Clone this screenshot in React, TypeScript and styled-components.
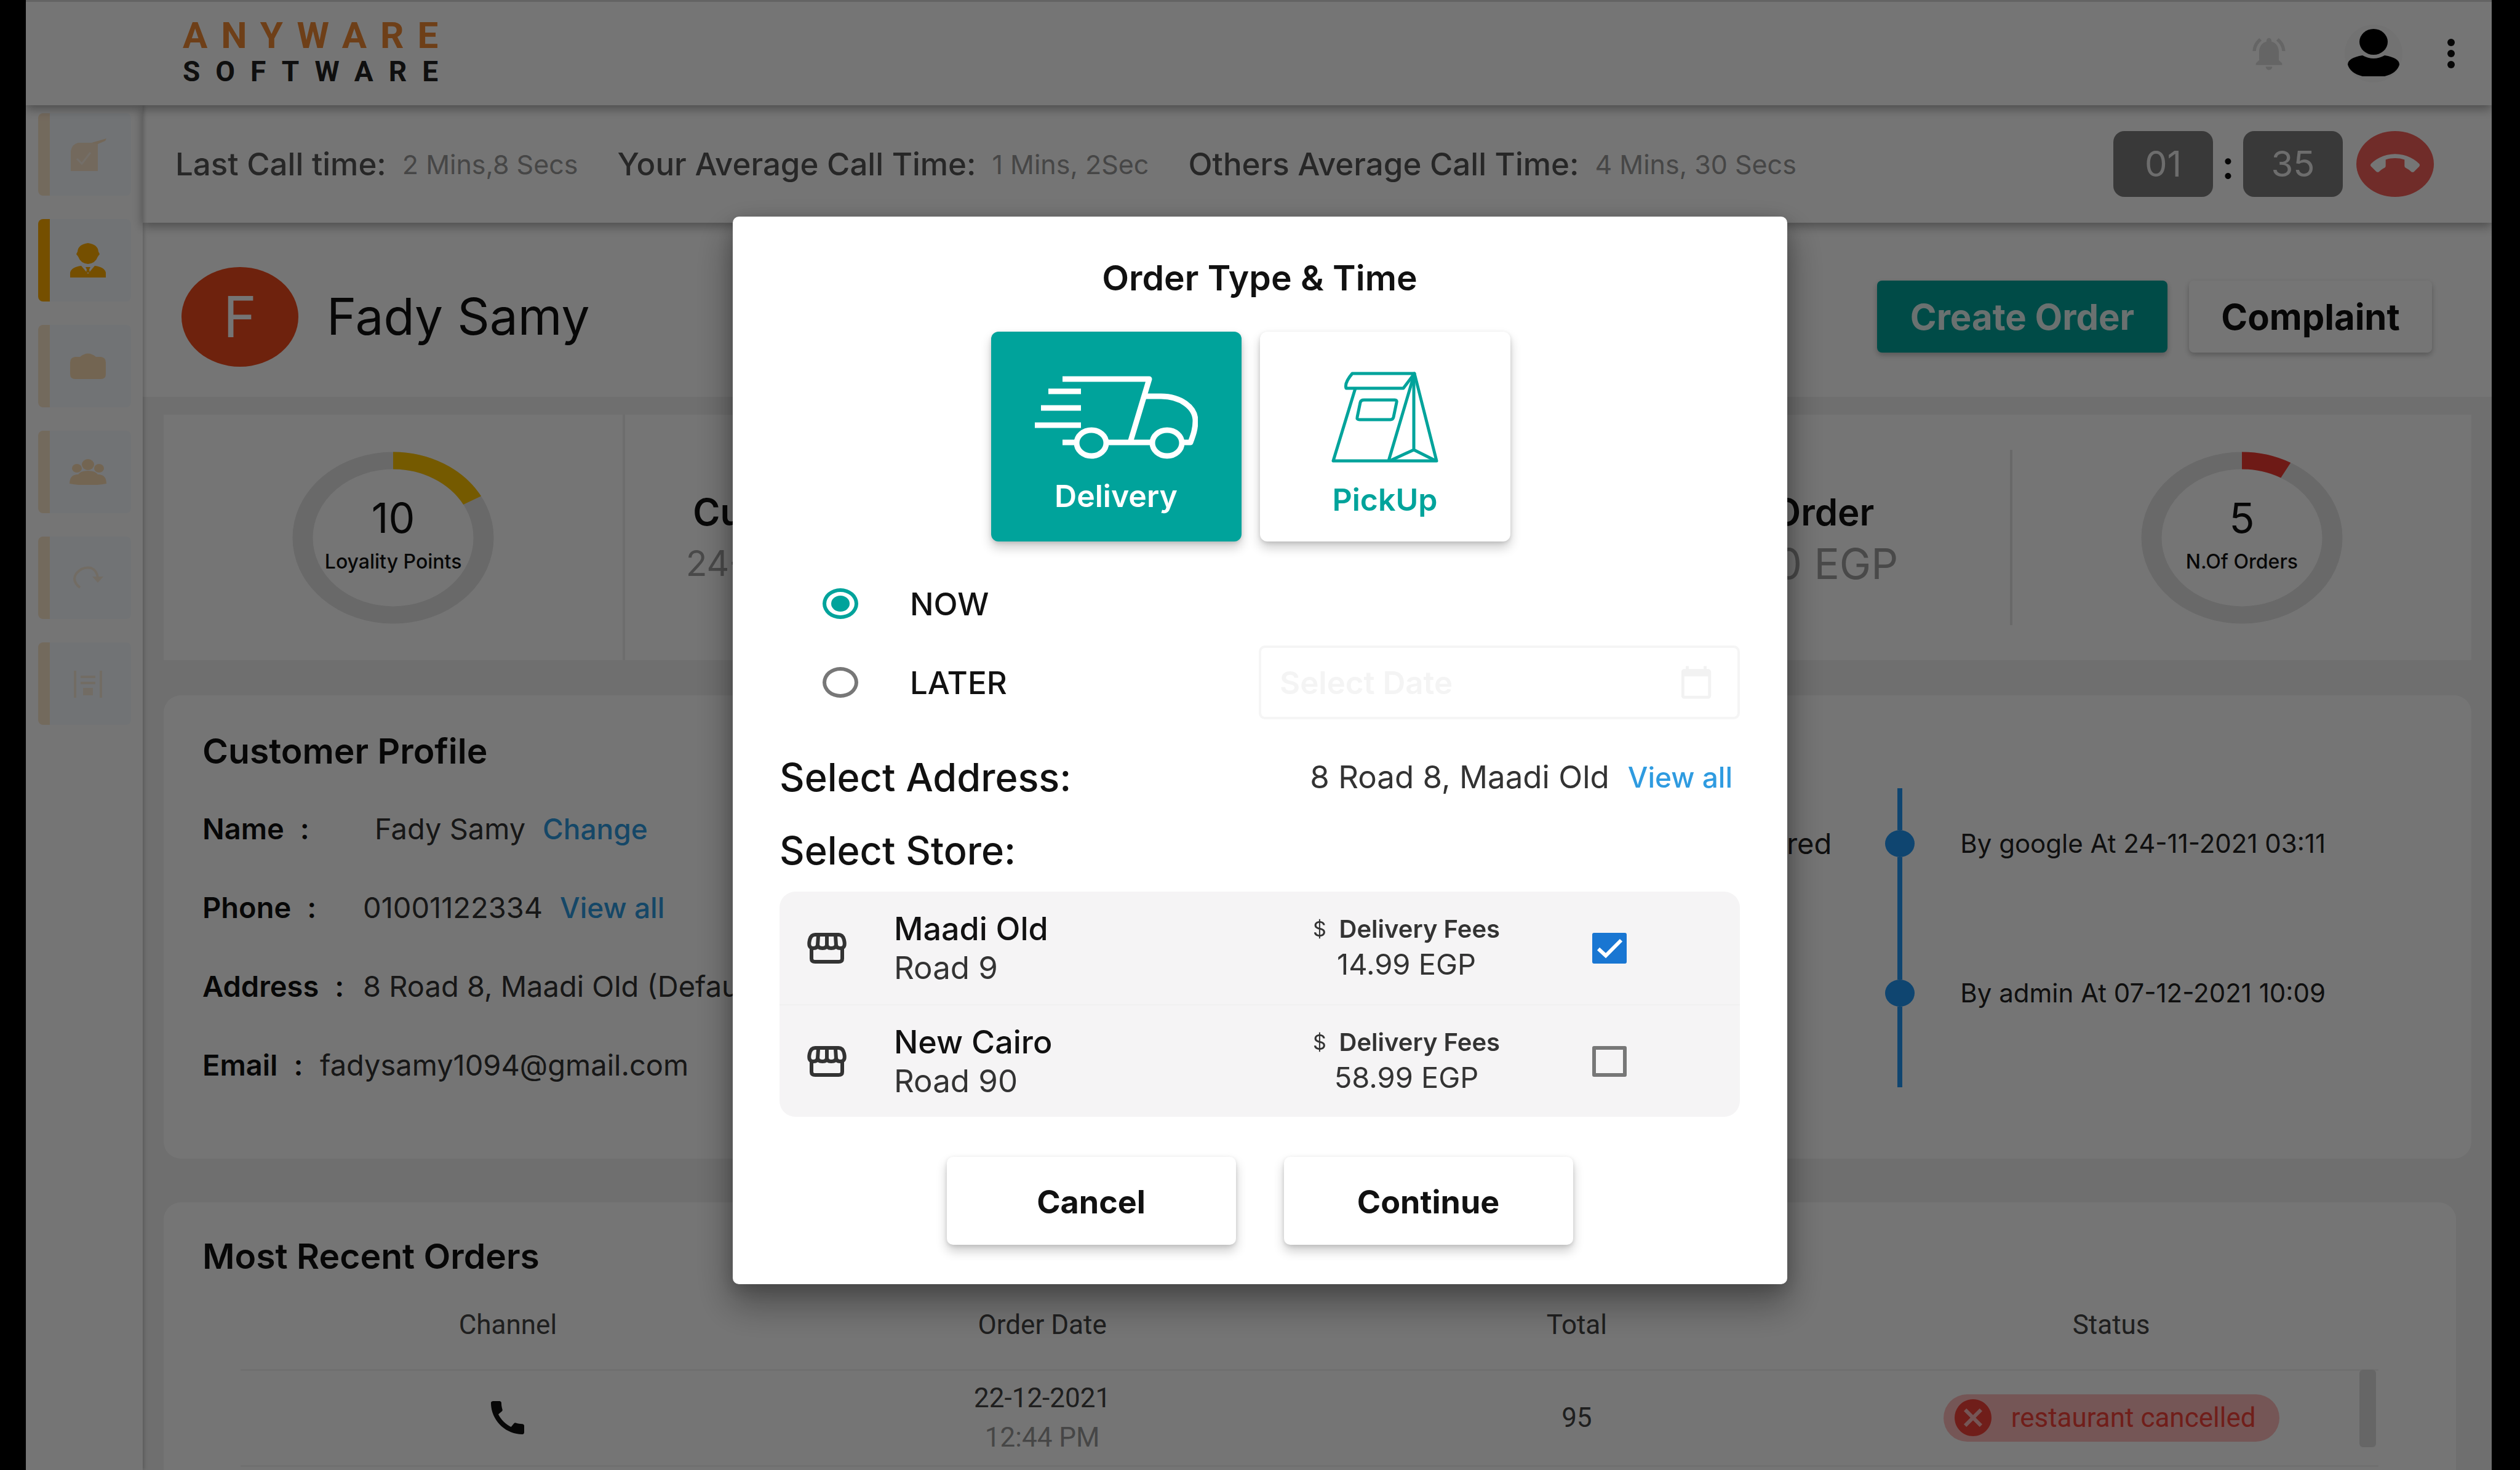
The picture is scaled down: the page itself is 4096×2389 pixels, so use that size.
import React, { useState } from 'react';
import styled, { createGlobalStyle } from 'styled-components';
import {
  MdCalendarToday,
  MdCall,
  MdCallEnd,
  MdCancel,
  MdNotificationsActive,
} from 'react-icons/md';

const teal = '#00a39b';
const sans = `Inter, 'Open Sans', sans-serif`;
const roboto = `Roboto, 'Open Sans', sans-serif`;

const GlobalStyle = createGlobalStyle`
  * { box-sizing: border-box; }
  body { margin: 0; background: #000; font-family: ${sans}; color: #111; }
  button, input { font-family: inherit; color: inherit; }
  button { border: 0; padding: 0; background: none; cursor: pointer; }
  a { text-decoration: none; }
  h1, h2, p, dl, dd, ol { margin: 0; padding: 0; }
  svg { display: block; }
`;

/* ---------- page shell ---------- */

const Shell = styled.div`
  height: 100vh;
  margin: 0 46px 0 42px;
  overflow: hidden;
  display: flex;
  flex-direction: column;
  background: #fff;
`;

const TopBar = styled.header`
  position: relative;
  z-index: 2;
  flex: none;
  height: 171px;
  display: flex;
  align-items: center;
  padding: 0 60px 0 255px;
  background: #fff;
  border-top: 3px solid #d8d8d8;
  box-shadow: 0 6px 16px rgba(0, 0, 0, 0.35);
`;

const Logo = styled.div`
  margin-right: auto;
  font-family: ${roboto};
  font-weight: 700;
`;

const LogoLine = styled.div<{ $size: number; $track: number; $color: string }>`
  font-size: ${(p) => p.$size}px;
  line-height: 58px;
  letter-spacing: ${(p) => p.$track}px;
  color: ${(p) => p.$color};
`;

const TopIcon = styled.button<{ $after: number; $color: string }>`
  margin-right: ${(p) => p.$after}px;
  color: ${(p) => p.$color};
`;

const Body = styled.div`
  flex: 1;
  min-height: 0;
  display: flex;
`;

const Sidebar = styled.nav`
  flex: none;
  width: 190px;
  padding: 13px 19px 0 20px;
  display: flex;
  flex-direction: column;
  gap: 38px;
  box-shadow: 2px 0 6px rgba(0, 0, 0, 0.2);
  z-index: 1;
`;

const SideItem = styled.a<{ $active?: boolean }>`
  height: 134px;
  display: flex;
  align-items: center;
  justify-content: center;
  padding-right: 8px;
  background: #f7fbff;
  border-left: 19px solid ${(p) => (p.$active ? '#ffad00' : '#fbe6cb')};
  border-radius: 8px;
  color: ${(p) => (p.$active ? '#ffad00' : '#fbdcb4')};
`;

const Content = styled.div`
  flex: 1;
  min-width: 0;
  display: flex;
  flex-direction: column;
`;

/* ---------- call bar ---------- */

const CallBar = styled.section`
  position: relative;
  flex: none;
  height: 191px;
  display: flex;
  align-items: center;
  padding: 0 94px 0 53px;
  background: #fff;
  box-shadow: 0 6px 16px rgba(0, 0, 0, 0.35);
`;

const CallStats = styled.dl`
  display: flex;
  gap: 64px;
  margin-right: auto;
  font-size: 43px;
  line-height: 60px;
`;

const CallStat = styled.div`
  display: flex;
  gap: 26px;
  dt { font-size: 51px; font-weight: 500; color: #555; }
  dd { color: #999; }
`;

const Timer = styled.div`
  display: flex;
  align-items: center;
`;

const TimerBox = styled.span`
  width: 162px;
  height: 107px;
  border-radius: 18px;
  background: #7c7c7c;
  color: #eee;
  font-size: 58px;
  line-height: 107px;
  text-align: center;
`;

const TimerColon = styled.span`
  width: 49px;
  font-size: 64px;
  font-weight: 600;
  line-height: 100px;
  text-align: center;
`;

const HangUp = styled.button`
  width: 126px;
  height: 107px;
  margin-left: 22px;
  border-radius: 50%;
  background: #f5605a;
  color: #fff;
  display: grid;
  place-items: center;
`;

/* ---------- customer heading ---------- */

const CustomerBar = styled.section`
  flex: none;
  height: 283px;
  display: flex;
  align-items: center;
  padding: 22px 97px 0 63px;
  background: #fff;
`;

const Avatar = styled.div`
  width: 190px;
  height: 162px;
  border-radius: 50%;
  background: #f04a1d;
  color: #fff;
  font-size: 92px;
  line-height: 162px;
  text-align: center;
`;

const CustomerName = styled.h1`
  margin-left: 46px;
  margin-right: auto;
  font-size: 82px;
  font-weight: 400;
`;

const BarButton = styled.button<{ $primary?: boolean }>`
  height: 117px;
  width: ${(p) => (p.$primary ? 472 : 395)}px;
  margin-left: 35px;
  border-radius: 8px;
  font-size: 58px;
  font-weight: 700;
  background: ${(p) => (p.$primary ? teal : '#fff')};
  color: ${(p) => (p.$primary ? '#e8f6f5' : '#111')};
  box-shadow: 0 4px 10px rgba(0, 0, 0, 0.25);
`;

/* ---------- panels ---------- */

const Panels = styled.main`
  flex: 1;
  min-height: 0;
  padding: 29px 33px 0 34px;
  background: #f1f1f1;
  display: flex;
  flex-direction: column;
`;

const StatsPanel = styled.section`
  flex: none;
  height: 399px;
  display: grid;
  grid-template-columns: repeat(5, 1fr);
  background: #fff;
`;

const StatCell = styled.div<{ $line?: boolean }>`
  position: relative;
  display: flex;
  align-items: center;
  justify-content: center;
  border-right: ${(p) => (p.$line ? '4px solid #eee' : '0')};
`;

const StatText = styled.div`
  text-align: center;
  white-space: nowrap;
`;

const StatTitle = styled.p`
  font-size: 60px;
  font-weight: 600;
  line-height: 84px;
`;

const StatValue = styled.p<{ $large?: boolean }>`
  font-size: ${(p) => (p.$large ? 69 : 57)}px;
  line-height: 84px;
  color: #a0a0a0;
`;

const ShortRule = styled.span`
  width: 4px;
  height: 285px;
  background: #e4e4e4;
  margin-right: auto;
`;

const Donut = styled.figure<{ $push?: boolean }>`
  margin: 0 ${(p) => (p.$push ? 'auto' : 0)} 0 0;
  display: grid;
  place-items: center;
  > * { grid-area: 1 / 1; }
`;

const DonutText = styled.figcaption`
  text-align: center;
  font-size: 32px;
  font-weight: 500;
  line-height: 60px;
  strong { display: block; font-size: 68px; font-weight: 400; line-height: 84px; }
  padding-bottom: 6px;
`;

const DetailPanel = styled.section`
  flex: none;
  height: 753px;
  margin-top: 57px;
  display: grid;
  grid-template-columns: 1fr 1fr;
  background: #fff;
  border-radius: 28px;
`;

const Profile = styled.div`
  padding: 61px 0 0 63px;
`;

const PanelTitle = styled.h2`
  font-size: 57px;
  font-weight: 600;
  line-height: 60px;
`;

const Fields = styled.dl`
  margin-top: 31px;
  font-size: 47px;
  white-space: nowrap;
`;

const Field = styled.div<{ $label: number }>`
  height: 128px;
  display: flex;
  align-items: center;
  dt { width: ${(p) => p.$label}px; font-weight: 600; }
  dt span { margin-left: 26px; }
  dd { color: #333; }
  a { margin-left: 28px; }
`;

const TextLink = styled.a`
  color: #2f9be0;
  font-size: 46px;
  font-weight: 500;
`;

const Timeline = styled.ol`
  list-style: none;
  padding: 151px 0 0 18px;
  font-size: 42px;
`;

const TimelineItem = styled.li`
  height: 243px;
  display: grid;
  grid-template-columns: 1fr 48px 1fr;
  > p { padding-top: 65px; line-height: 50px; color: #222; white-space: nowrap; }
  > p:first-child { padding-right: 87px; text-align: right; font-size: 47px; }
  > p:last-child { padding-left: 74px; }
`;

const Track = styled.div`
  display: flex;
  flex-direction: column;
  align-items: center;
  &::before { content: ''; width: 8px; height: 68px; background: #2196f3; }
  &::after { content: ''; width: 8px; flex: 1; background: #2196f3; }
`;

const Dot = styled.span`
  width: 48px;
  height: 44px;
  border-radius: 50%;
  background: #2196f3;
`;

const OrdersPanel = styled.section`
  flex: 1;
  min-height: 0;
  margin: 71px 25px 0 0;
  padding-top: 58px;
  background: #fff;
  border-radius: 28px 28px 0 0;
  > h2 { margin-left: 63px; }
`;

const TableBox = styled.div`
  position: relative;
  margin: 10px 126px 0 125px;
`;

const ScrollThumb = styled.span`
  position: absolute;
  right: 4px;
  top: 144px;
  width: 27px;
  height: 126px;
  border-radius: 6px;
  background: #dedede;
`;

const Orders = styled.table`
  width: 100%;
  table-layout: fixed;
  border-collapse: collapse;
  font-family: ${roboto};
  font-size: 44px;
  text-align: center;
  color: #444;
  th { height: 144px; padding: 0; font-weight: 400; border-bottom: 3px solid #f3f3f3; }
  td { height: 156px; padding: 0; border-bottom: 3px solid #f3f3f3; line-height: 64px; }
  td > svg { margin: 0 auto; color: #111; }
  small { display: block; font-size: 44px; color: #999; }
`;

const Badge = styled.span`
  display: inline-flex;
  align-items: center;
  gap: 26px;
  height: 77px;
  padding: 0 38px 0 12px;
  border-radius: 39px;
  background: #ffbcbc;
  color: #f4433a;
  vertical-align: middle;
`;

/* ---------- dialog ---------- */

const Overlay = styled.div`
  position: fixed;
  inset: 0;
  z-index: 10;
  padding-top: 50px;
  display: flex;
  align-items: center;
  justify-content: center;
  background: rgba(0, 0, 0, 0.54);
`;

const Dialog = styled.form`
  width: 1714px;
  padding: 68px 77px 64px 76px;
  background: #fff;
  border-radius: 10px;
  box-shadow: 0 30px 60px 6px rgba(0, 0, 0, 0.32), 0 8px 30px rgba(0, 0, 0, 0.2);
`;

const DialogTitle = styled.h2`
  font-size: 57px;
  font-weight: 600;
  line-height: 64px;
  text-align: center;
`;

const TypeRow = styled.div`
  margin-top: 55px;
  display: flex;
  justify-content: center;
`;

const TypeTile = styled.button<{ $on: boolean }>`
  width: 407px;
  height: 341px;
  margin-right: 30px;
  padding-top: 26px;
  display: flex;
  flex-direction: column;
  align-items: center;
  justify-content: center;
  gap: 30px;
  border-radius: 12px;
  background: ${(p) => (p.$on ? teal : '#fff')};
  color: ${(p) => (p.$on ? '#fff' : teal)};
  font-size: 50px;
  font-weight: 600;
  line-height: 60px;
  box-shadow: 0 10px 18px rgba(0, 0, 0, 0.2), 0 2px 6px rgba(0, 0, 0, 0.12);
`;

const TimeRow = styled.div<{ $tall?: boolean }>`
  height: ${(p) => (p.$tall ? 120 : 64)}px;
  margin-top: ${(p) => (p.$tall ? 36 : 69)}px;
  display: flex;
  align-items: center;
  padding-left: 70px;
`;

const RadioLabel = styled.label`
  margin-right: auto;
  display: flex;
  align-items: center;
  gap: 84px;
  font-size: 51px;
  font-weight: 500;
`;

const Radio = styled.input`
  appearance: none;
  width: 58px;
  height: 50px;
  margin: 0;
  border: 6px solid #777;
  border-radius: 50%;
  display: grid;
  place-items: center;
  &:checked { border-color: ${teal}; }
  &:checked::before {
    content: '';
    width: 30px;
    height: 26px;
    border-radius: 50%;
    background: ${teal};
  }
`;

const DateBox = styled.div`
  width: 782px;
  height: 120px;
  display: flex;
  align-items: center;
  padding: 0 38px 0 30px;
  border: 4px solid #f5f5f5;
  border-radius: 10px;
  color: #f2f2f2;
`;

const DateInput = styled.input`
  flex: 1;
  min-width: 0;
  border: 0;
  padding: 0;
  background: none;
  font-size: 51px;
  font-weight: 600;
  &::placeholder { color: #f4f4f4; opacity: 1; }
`;

const SectionRow = styled.div<{ $top: number }>`
  margin-top: ${(p) => p.$top}px;
  padding-right: 12px;
  display: flex;
  align-items: center;
  line-height: 64px;
  font-size: 51px;
  color: #333;
  h2 { margin-right: auto; font-size: 63px; font-weight: 500; color: #111; }
  a { margin-left: 30px; }
`;

const StoreList = styled.div`
  margin-top: 35px;
  border-radius: 26px;
  background: #f5f4f5;
`;

const StoreRow = styled.div`
  height: 183px;
  padding: 0 184px 0 45px;
  display: flex;
  align-items: center;
  font-size: 51px;
  color: #333;
  & + & { border-top: 2px solid #f0f0f0; }
`;

const StoreName = styled.label`
  margin: 0 auto 0 77px;
  line-height: 63px;
  strong { display: block; font-size: 52px; font-weight: 500; color: #111; }
`;

const Fees = styled.div`
  width: 304px;
  margin-right: 150px;
  padding-bottom: 6px;
  line-height: 57px;
  text-align: center;
  font-size: 47px;
  p:first-child { display: flex; justify-content: space-between; font-size: 40px; }
  span { font-size: 34px; }
  strong { font-weight: 600; }
`;

const Check = styled.input`
  appearance: none;
  width: 56px;
  height: 50px;
  margin: 0;
  border: 6px solid #777;
  border-radius: 3px;
  &:checked {
    border-color: #1976d2;
    background: #1976d2
      url("data:image/svg+xml,%3Csvg xmlns='http://www.w3.org/2000/svg' viewBox='0 0 44 38'%3E%3Cpath d='M4 20l12 11L41 6' fill='none' stroke='white' stroke-width='6'/%3E%3C/svg%3E")
      center / 100% 100% no-repeat;
  }
`;

const Actions = styled.div`
  margin-top: 65px;
  display: flex;
  justify-content: center;
  gap: 78px;
`;

const ActionButton = styled.button`
  width: 470px;
  height: 143px;
  padding-top: 4px;
  border-radius: 10px;
  background: #fff;
  font-size: 52px;
  font-weight: 700;
  box-shadow: 0 10px 18px rgba(0, 0, 0, 0.2), 0 2px 6px rgba(0, 0, 0, 0.12);
`;

/* ---------- drawings ---------- */

const TruckIcon = () => (
  <svg width="266" height="136" viewBox="0 0 266 136" fill="none" stroke="currentColor" strokeWidth="9">
    <path d="M46 6H187L156 109" strokeLinejoin="round" />
    <path d="M23 26H76M11 53H76M1 81H76M46 109H68M118 109H192" />
    <path d="M181 34H206C238 34 262 52 262 74C262 88 258 98 254 109H242" strokeLinejoin="round" />
    <ellipse cx="93" cy="110" rx="24" ry="21" />
    <ellipse cx="216" cy="110" rx="24" ry="21" />
  </svg>
);

const BagIcon = () => (
  <svg width="174" height="148" viewBox="0 0 174 148" fill="none" stroke="currentColor" strokeWidth="5" strokeLinejoin="round">
    <path d="M34 3H135L117 27H24Q21 18 34 3Z" />
    <path d="M39 27L3 145H171L135 3L93 145" />
    <path d="M134 8V127L97 144M134 127L168 144" />
    <path d="M53 46H103Q107 46 106 50L101 74Q100 78 96 78H46Q41 78 42 74L47 50Q48 46 53 46Z" />
  </svg>
);

const StoreIcon = () => (
  <svg width="64" height="50" viewBox="0 0 64 50" fill="none" stroke="#333" strokeWidth="6">
    <path d="M13 3H51Q58 3 60 12Q63 25 54 25Q47 25 47 19Q47 25 39 25Q32 25 32 19Q32 25 25 25Q17 25 17 19Q17 25 10 25Q1 25 4 12Q6 3 13 3Z" />
    <path d="M18 5L17 20M32 5V20M46 5L47 20" />
    <path d="M7 25V42Q7 47 13 47H51Q57 47 57 42V25" />
  </svg>
);

const PersonIcon = () => (
  <svg width="96" height="96" viewBox="0 0 96 96">
    <circle cx="48" cy="48" r="47" fill="#f8f8f8" />
    <ellipse cx="48" cy="29" rx="23" ry="21" fill="#000" />
    <path d="M30 51Q48 61 66 51Q90 55 90 66Q86 80 66 85H30Q10 80 6 66Q6 55 30 51Z" fill="#000" />
  </svg>
);

const DotsIcon = () => (
  <svg width="12" height="48" viewBox="0 0 12 48" fill="#111">
    <circle cx="6" cy="6" r="6" />
    <circle cx="6" cy="24" r="6" />
    <circle cx="6" cy="42" r="6" />
  </svg>
);

const OrderIcon = () => (
  <svg width="60" height="54" viewBox="0 0 60 54" fill="currentColor" opacity="0.85">
    <path d="M14 8H46V54H2V22Q4 10 14 8Z" opacity="0.8" />
    <path d="M12 34L20 42L34 24" fill="none" stroke="#fff" strokeWidth="3" opacity="0.5" />
    <path d="M36 8L60 1L58 5L46 10Z" />
  </svg>
);

const AgentIcon = () => (
  <svg width="58" height="56" viewBox="0 0 58 56" fill="currentColor">
    <path d="M29 0Q45 2 46 14L48 18L45 22Q41 33 29 34Q17 33 13 22L10 18L12 14Q13 2 29 0Z" />
    <path d="M0 56V48Q2 39 18 37L29 50L40 37Q56 39 58 48V56Z" />
    <path d="M25 39H33L31 43L32 48H26L27 43Z" />
  </svg>
);

const StaffIcon = () => (
  <svg width="58" height="42" viewBox="0 0 58 42" fill="currentColor">
    <path d="M16 6Q29 -5 42 6H50Q58 7 58 15V34Q58 42 50 42H8Q0 42 0 34V15Q0 7 8 6Z" />
  </svg>
);

const TeamIcon = () => (
  <svg width="60" height="42" viewBox="0 0 60 42" fill="currentColor">
    <ellipse cx="30" cy="9" rx="10" ry="9" />
    <ellipse cx="12" cy="15" rx="8" ry="7" />
    <ellipse cx="48" cy="15" rx="8" ry="7" />
    <path d="M0 40Q0 25 14 25Q18 19 30 19Q42 19 46 25Q60 25 60 40Q45 43 30 42Q15 43 0 40Z" />
  </svg>
);

const ReturnIcon = () => (
  <svg width="50" height="38" viewBox="0 0 50 38" fill="none" stroke="currentColor" strokeWidth="4" opacity="0.5">
    <path d="M12 35Q-2 24 6 12Q16 0 30 3Q40 7 41 20" />
    <path d="M32 17H50L41 27Z" fill="currentColor" stroke="none" />
  </svg>
);

const BranchIcon = () => (
  <svg width="48" height="50" viewBox="0 0 48 50" fill="none" stroke="currentColor" strokeWidth="4" opacity="0.5">
    <path d="M3 4V48M45 4V48M12 14H36M12 24H36" />
    <path d="M18 34H30V42H18Z" fill="currentColor" />
  </svg>
);

const Ring = ({ color, share }: { color: string; share: number }) => (
  <svg width="328" height="280" viewBox="0 0 328 328" preserveAspectRatio="none" fill="none" strokeWidth="33">
    <circle cx="164" cy="164" r="147" stroke="#e4e4e4" />
    <circle
      cx="164"
      cy="164"
      r="147"
      stroke={color}
      pathLength={360}
      strokeDasharray={`${share} 360`}
      transform="rotate(-90 164 164)"
    />
  </svg>
);

/* ---------- data ---------- */

const sideLinks = [
  { label: 'Orders', icon: OrderIcon },
  { label: 'Customer', icon: AgentIcon, active: true },
  { label: 'Staff', icon: StaffIcon },
  { label: 'Teams', icon: TeamIcon },
  { label: 'Returns', icon: ReturnIcon },
  { label: 'Branches', icon: BranchIcon },
];

const callStats = [
  ['Last Call time:', '2 Mins,8 Secs'],
  ['Your Average Call Time:', '1 Mins, 2Sec'],
  ['Others Average Call Time:', '4 Mins, 30 Secs'],
];

const fields = [
  { label: 'Name', width: 280, value: 'Fady Samy', link: 'Change' },
  { label: 'Phone', width: 261, value: '01001122334', link: 'View all' },
  { label: 'Address', width: 261, value: '8 Road 8, Maadi Old (Default)' },
  { label: 'Email', width: 191, value: 'fadysamy1094@gmail.com' },
];

const events = [
  ['Registered', 'By google At 24-11-2021 03:11'],
  ['', 'By admin At 07-12-2021 10:09'],
];

const stores = [
  { id: 'maadi', name: 'Maadi Old', road: 'Road 9', fee: '14.99 EGP' },
  { id: 'cairo', name: 'New Cairo', road: 'Road 90', fee: '58.99 EGP' },
];

export default function App() {
  const [type, setType] = useState('delivery');
  const [time, setTime] = useState('now');
  const [store, setStore] = useState('maadi');

  return (
    <>
      <GlobalStyle />
      <Shell>
        <TopBar>
          <Logo>
            <LogoLine $size={60} $track={22} $color="#f08a35">ANYWARE</LogoLine>
            <LogoLine $size={46} $track={25} $color="#222">SOFTWARE</LogoLine>
          </Logo>
          <TopIcon type="button" aria-label="Notifications" $after={90} $color="#dcdcdc">
            <MdNotificationsActive size={64} />
          </TopIcon>
          <TopIcon type="button" aria-label="Account" $after={72} $color="#000">
            <PersonIcon />
          </TopIcon>
          <TopIcon type="button" aria-label="More" $after={0} $color="#111">
            <DotsIcon />
          </TopIcon>
        </TopBar>

        <Body>
          <Sidebar>
            {sideLinks.map(({ label, icon: Icon, active }) => (
              <SideItem key={label} href="#" aria-label={label} $active={active}>
                <Icon />
              </SideItem>
            ))}
          </Sidebar>

          <Content>
            <CallBar>
              <CallStats>
                {callStats.map(([name, value]) => (
                  <CallStat key={name}>
                    <dt>{name}</dt>
                    <dd>{value}</dd>
                  </CallStat>
                ))}
              </CallStats>
              <Timer>
                <TimerBox>01</TimerBox>
                <TimerColon>:</TimerColon>
                <TimerBox>35</TimerBox>
                <HangUp type="button" aria-label="Hang up">
                  <MdCallEnd size={80} />
                </HangUp>
              </Timer>
            </CallBar>

            <CustomerBar>
              <Avatar>F</Avatar>
              <CustomerName>Fady Samy</CustomerName>
              <BarButton type="button" $primary>Create Order</BarButton>
              <BarButton type="button">Complaint</BarButton>
            </CustomerBar>

            <Panels>
              <StatsPanel>
                <StatCell $line>
                  <Donut>
                    <Ring color="#ffc400" share={61} />
                    <DonutText><strong>10</strong>Loyality Points</DonutText>
                  </Donut>
                </StatCell>
                <StatCell>
                  <StatText>
                    <StatTitle>Customer Created</StatTitle>
                    <StatValue>24-11-2021 03:11 AM</StatValue>
                  </StatText>
                </StatCell>
                <StatCell />
                <StatCell>
                  <StatText>
                    <StatTitle>First Order</StatTitle>
                    <StatValue $large>250.00 EGP</StatValue>
                  </StatText>
                </StatCell>
                <StatCell>
                  <ShortRule />
                  <Donut $push>
                    <Ring color="#f03a30" share={29} />
                    <DonutText><strong>5</strong>N.Of Orders</DonutText>
                  </Donut>
                </StatCell>
              </StatsPanel>

              <DetailPanel>
                <Profile>
                  <PanelTitle>Customer Profile</PanelTitle>
                  <Fields>
                    {fields.map((f) => (
                      <Field key={f.label} $label={f.width}>
                        <dt>{f.label}<span>:</span></dt>
                        <dd>
                          {f.value}
                          {f.link && <TextLink href="#">{f.link}</TextLink>}
                        </dd>
                      </Field>
                    ))}
                  </Fields>
                </Profile>
                <Timeline>
                  {events.map(([what, when]) => (
                    <TimelineItem key={when}>
                      <p>{what}</p>
                      <Track><Dot /></Track>
                      <p>{when}</p>
                    </TimelineItem>
                  ))}
                </Timeline>
              </DetailPanel>

              <OrdersPanel>
                <PanelTitle>Most Recent Orders</PanelTitle>
                <TableBox>
                  <Orders>
                    <thead>
                      <tr>
                        <th>Channel</th>
                        <th>Order Date</th>
                        <th>Total</th>
                        <th>Status</th>
                      </tr>
                    </thead>
                    <tbody>
                      <tr>
                        <td><MdCall size={72} /></td>
                        <td>22-12-2021<small>12:44 PM</small></td>
                        <td>95</td>
                        <td><Badge><MdCancel size={72} />restaurant cancelled</Badge></td>
                      </tr>
                    </tbody>
                  </Orders>
                  <ScrollThumb />
                </TableBox>
              </OrdersPanel>
            </Panels>
          </Content>
        </Body>
      </Shell>

      <Overlay>
        <Dialog role="dialog" aria-labelledby="dialog-title" onSubmit={(e) => e.preventDefault()}>
          <DialogTitle id="dialog-title">Order Type &amp; Time</DialogTitle>

          <TypeRow>
            <TypeTile type="button" $on={type === 'delivery'} onClick={() => setType('delivery')}>
              <TruckIcon />
              Delivery
            </TypeTile>
            <TypeTile type="button" $on={type === 'pickup'} onClick={() => setType('pickup')}>
              <BagIcon />
              PickUp
            </TypeTile>
          </TypeRow>

          <TimeRow>
            <RadioLabel>
              <Radio type="radio" name="time" checked={time === 'now'} onChange={() => setTime('now')} />
              NOW
            </RadioLabel>
          </TimeRow>
          <TimeRow $tall>
            <RadioLabel>
              <Radio type="radio" name="time" checked={time === 'later'} onChange={() => setTime('later')} />
              LATER
            </RadioLabel>
            <DateBox>
              <DateInput type="text" placeholder="Select Date" aria-label="Select Date" disabled={time === 'now'} />
              <MdCalendarToday size={58} />
            </DateBox>
          </TimeRow>

          <SectionRow $top={62}>
            <h2>Select Address:</h2>
            8 Road 8, Maadi Old
            <TextLink href="#">View all</TextLink>
          </SectionRow>
          <SectionRow $top={55}>
            <h2>Select Store:</h2>
          </SectionRow>

          <StoreList>
            {stores.map((s) => (
              <StoreRow key={s.id}>
                <StoreIcon />
                <StoreName htmlFor={s.id}>
                  <strong>{s.name}</strong>
                  {s.road}
                </StoreName>
                <Fees>
                  <p><span>$</span><strong>Delivery Fees</strong></p>
                  <p>{s.fee}</p>
                </Fees>
                <Check id={s.id} type="checkbox" checked={store === s.id} onChange={() => setStore(s.id)} />
              </StoreRow>
            ))}
          </StoreList>

          <Actions>
            <ActionButton type="button">Cancel</ActionButton>
            <ActionButton type="submit">Continue</ActionButton>
          </Actions>
        </Dialog>
      </Overlay>
    </>
  );
}
